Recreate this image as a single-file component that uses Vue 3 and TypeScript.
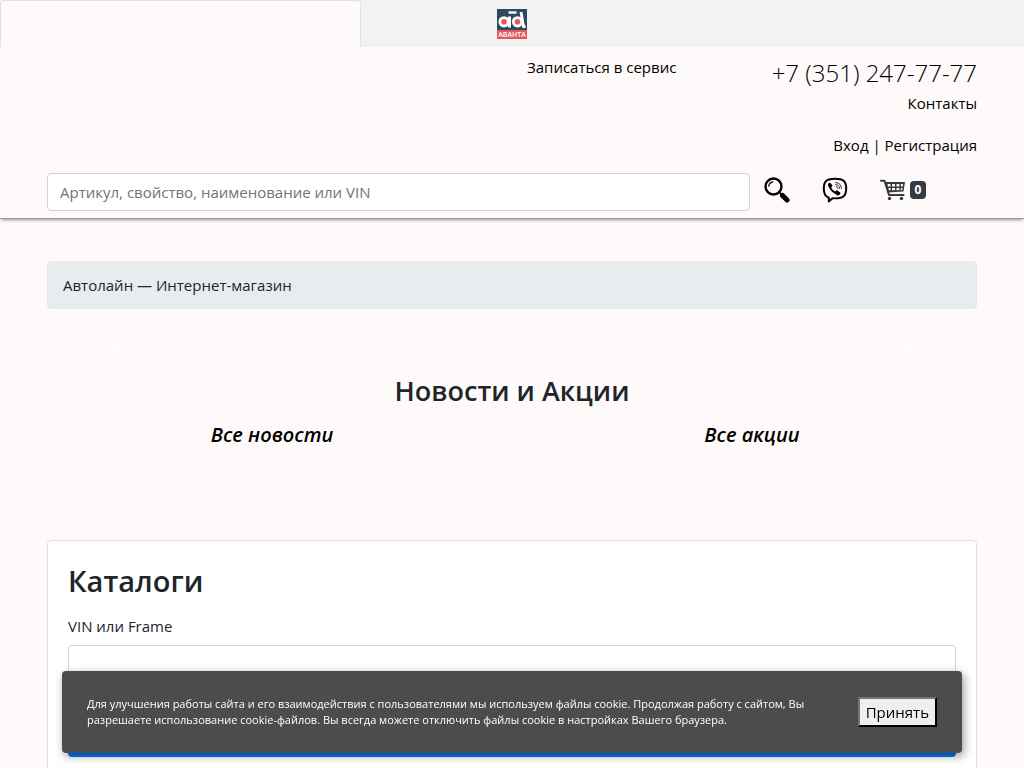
<script setup lang="ts">
import { ref } from 'vue'

const query = ref('')
const vin = ref('')
const cartCount = ref(0)
const cookieOpen = ref(true)
</script>

<template>
  <div class="page">
    <nav class="tabs" aria-label="Магазины">
      <a class="tab active" href="#" aria-label="Автолайн"></a>
      <a class="tab" href="#" aria-label="Аванта">
        <svg class="logo" viewBox="0 0 30 30" width="30" height="30">
          <rect width="30" height="30" fill="#2e4a62" />
          <rect y="21" width="30" height="9" fill="#e4585b" />
          <path d="M12.500 7.500V18.500" stroke="#fff" stroke-width="3" />
          <circle cx="7" cy="12.800" r="4.200" fill="#e4585b" stroke="#fff" stroke-width="2.800" />
          <path d="M24 3l2.500 14.500h2" fill="none" stroke="#fff" stroke-width="2.800" />
          <circle cx="20.500" cy="12.800" r="4.200" fill="#e4585b" stroke="#fff" stroke-width="2.800" />
          <path d="M11.500 3.500h8" stroke="#fff" stroke-width="2.400" />
          <text x="15" y="28" text-anchor="middle">АВАНТА</text>
        </svg>
      </a>
      <span class="tab" aria-hidden="true"></span>
    </nav>

    <header class="header">
      <div class="contacts">
        <a class="service" href="#">Записаться в сервис</a>
        <div class="phones">
          <a class="phone" href="tel:+73512477777">+7 (351) 247-77-77</a>
          <a href="#">Контакты</a>
        </div>
      </div>
      <div class="account"><a href="#">Вход</a> | <a href="#">Регистрация</a></div>
      <form class="search" @submit.prevent>
        <input v-model="query" class="field" type="text" aria-label="Поиск" placeholder="Артикул, свойство, наименование или VIN" />
        <button class="icon" type="submit" aria-label="Найти">
          <svg viewBox="0 0 26 26" width="26" height="26">
            <circle cx="9.500" cy="9.500" r="8" fill="none" stroke="#000" stroke-width="2.400" />
            <path d="M4.800 9a5 5 0 0 1 4-4.200" fill="none" stroke="#000" stroke-width="1.300" stroke-linecap="round" />
            <path d="M15.500 15.500l2.500 2.500" stroke="#000" stroke-width="2" />
            <path d="M18.500 18.500l4.500 4.500" stroke="#000" stroke-width="5" stroke-linecap="round" />
          </svg>
        </button>
        <a class="icon viber" href="#" aria-label="Viber">
          <svg viewBox="0 0 26 26" width="26" height="26">
            <path d="M13 1.800C5 1.800 1.800 4 1.800 11.500c0 5.500 1.700 8.300 5 9.200V24.500l3.700-3.200c10.500.6 13.700-2 13.700-9.800C24.200 4 21 1.800 13 1.800z" fill="none" stroke="#000" stroke-width="2" stroke-linejoin="round" />
            <path d="M7.500 5.800c-1.200.6-1.900 1.400-1.500 2.700 1.700 4.400 4.600 7.500 9.200 9.700 1.600.6 2.600-.4 3.200-1.600.3-.8-.1-1.200-3-3.100-.7-.4-1.200-.1-2 1-1.900-.6-3.500-2.200-4.200-4.200 1.200-.8 1.400-1.300 1-2-1-1.700-1.900-2.900-2.700-2.500z" />
            <path d="M13.500 5.500c3.700.2 5.800 2.300 5.900 6M13.700 7.500c2.300.2 3.700 1.600 3.800 3.900M14 9.400c1 .1 1.600.7 1.700 1.700" fill="none" stroke="#000" stroke-width="0.800" stroke-linecap="round" />
          </svg>
        </a>
        <a class="icon cart" href="#" aria-label="Корзина">
          <svg viewBox="0 0 26 22" width="26" height="22">
            <path d="M1 1.800h3.500L9 16h14.500" fill="none" stroke="#343a40" stroke-width="2" stroke-linecap="round" stroke-linejoin="round" />
            <path d="M5 3h20l-1.500 9.500L8 13.500z" fill="#343a40" />
            <path d="M7.500 5h3v2.500H8zM12 5h3v2.500h-3zM16.500 5h2.800v2.500h-2.800zM20.800 5h2.300l-.4 2.500h-1.900zM8.300 9h2.200v2.300H9zM12 9h3v2.300h-3zM16.500 9h2.800v2.300h-2.800zM20.800 9h1.700l-.4 2.300h-1.300z" fill="#fefaf9" />
            <circle cx="9.500" cy="19.500" r="1.700" fill="#343a40" />
            <circle cx="21.500" cy="19.500" r="1.700" fill="#343a40" />
          </svg>
          <span class="badge">{{ cartCount }}</span>
        </a>
      </form>
    </header>

    <main class="content">
      <div class="breadcrumb">Автолайн — Интернет-магазин</div>

      <section class="carousel" aria-label="Баннеры">
        <button class="arrow" type="button" aria-label="Назад">
          <svg viewBox="0 0 8 8" width="20" height="20"><path d="M5.250 0l-4 4 4 4 1.500-1.500L4.250 4l2.500-2.500L5.250 0z" fill="#fff" /></svg>
        </button>
        <button class="arrow" type="button" aria-label="Вперёд">
          <svg viewBox="0 0 8 8" width="20" height="20"><path d="M2.750 0l-1.500 1.500L3.750 4l-2.500 2.500L2.750 8l4-4-4-4z" fill="#fff" /></svg>
        </button>
      </section>

      <section class="news">
        <h2>Новости и Акции</h2>
        <div class="columns">
          <a href="#">Все новости</a>
          <a href="#">Все акции</a>
        </div>
      </section>

      <section class="card">
        <h1>Каталоги</h1>
        <form @submit.prevent>
          <label for="vin">VIN или Frame</label>
          <input id="vin" v-model="vin" class="field" type="text" />
          <button class="submit" type="submit" aria-label="Найти"></button>
        </form>
      </section>
    </main>

    <aside v-if="cookieOpen" class="cookie">
      <p>Для улучшения работы сайта и его взаимодействия с пользователями мы используем файлы cookie. Продолжая работу с сайтом, Вы разрешаете использование cookie-файлов. Вы всегда можете отключить файлы cookie в настройках Вашего браузера.</p>
      <button type="button" @click="cookieOpen = false">Принять</button>
    </aside>
  </div>
</template>

<style>
body {
  background: #fefaf9;
  overflow: hidden;
}
</style>

<style scoped>
.page,
.page * {
  box-sizing: border-box;
}
.page {
  font: 400 15px/24px "Open Sans", "Noto Sans", sans-serif;
  color: #212529;
  height: 100vh;
  overflow: hidden;
}
a {
  color: #000;
  text-decoration: none;
}
button {
  font: inherit;
  cursor: pointer;
}
.tabs {
  display: grid;
  grid-template-columns: 361fr 302fr 361fr;
  height: 47px;
  background: #f2f2f2;
}
.tab {
  display: flex;
  align-items: center;
  justify-content: center;
}
.tab.active {
  background: #fefaf9;
  border: 1px solid #dee2e6;
  border-bottom: 0;
  border-radius: 4px 4px 0 0;
}
.logo text {
  font: 600 7px "Open Sans", sans-serif;
  fill: #fff;
}
.header {
  padding: 8px 47px 7px;
  border-bottom: 1px solid #999;
  box-shadow: 0 2px 3px -1px rgba(0, 0, 0, 0.4);
  color: #000;
}
.contacts {
  display: flex;
  justify-content: space-between;
  padding-left: 480px;
}
.phones {
  display: flex;
  flex-direction: column;
  align-items: flex-end;
}
.phone {
  font-size: 24px;
  font-weight: 300;
  line-height: 36px;
}
.account {
  margin-top: 18px;
  text-align: right;
}
.search {
  display: flex;
  align-items: center;
  margin-top: 16px;
}
.field {
  display: block;
  width: 100%;
  height: 38px;
  padding: 6px 12px;
  border: 1px solid #ced4da;
  border-radius: 4px;
  background: #fff;
  color: #495057;
  font: inherit;
}
.search .field {
  flex: 1;
  min-width: 0;
}
.field::placeholder {
  color: #6c757d;
  opacity: 1;
}
.icon {
  display: flex;
  align-items: center;
  margin-left: 14px;
  padding: 0 0 4px;
  border: 0;
  background: none;
}
.viber {
  margin-left: 32px;
}
.cart {
  margin-left: 32px;
  margin-right: 51px;
  gap: 4px;
}
.badge {
  width: 16px;
  height: 18px;
  border-radius: 4px;
  background: #343a40;
  color: #fff;
  font-size: 12px;
  font-weight: 700;
  line-height: 18px;
  text-align: center;
}
.content {
  padding: 42px 47px 0;
}
.breadcrumb {
  padding: 12px 16px;
  border-radius: 4px;
  background: #e9ecef;
}
.carousel {
  display: flex;
  justify-content: space-between;
  padding: 29px 61px 0;
}
.arrow {
  display: flex;
  padding: 0;
  border: 0;
  background: none;
  opacity: 0.5;
}
h1,
h2 {
  margin: 0;
  font-weight: 600;
}
h2 {
  padding-top: 16px;
  font-size: 27px;
  line-height: 34px;
  text-align: center;
}
.columns {
  display: grid;
  grid-template-columns: 1fr 1fr;
  gap: 30px;
  margin-top: 15px;
  padding-bottom: 93px;
  text-align: center;
}
.columns a {
  font-size: 20px;
  font-style: italic;
  font-weight: 600;
}
.card {
  padding: 19px 20px;
  border: 1px solid #dfdfdf;
  border-radius: 4px;
  background: #fff;
}
h1 {
  font-size: 29px;
  line-height: 42px;
}
.card label {
  display: block;
  margin: 12px 0 7px;
}
.submit {
  display: block;
  width: 100%;
  height: 38px;
  margin-top: 36px;
  border: 0;
  border-radius: 4px;
  background: #007bff;
}
.cookie {
  position: fixed;
  left: 62px;
  right: 62px;
  bottom: 15px;
  display: flex;
  align-items: center;
  justify-content: space-between;
  padding: 25px;
  border-radius: 4px;
  background: #4c4c4c;
  box-shadow: 2px 3px 10px rgba(0, 0, 0, 0.4);
  color: #fff;
}
.cookie p {
  max-width: 725px;
  margin: 0;
  font-size: 11px;
  line-height: 16px;
}
.cookie button {
  height: 30px;
  padding: 0 6px;
  border: 2px outset #767676;
  border-color: #767676 #212121 #212121 #767676;
  background: #efefef;
  color: #000;
  line-height: 26px;
}
</style>
